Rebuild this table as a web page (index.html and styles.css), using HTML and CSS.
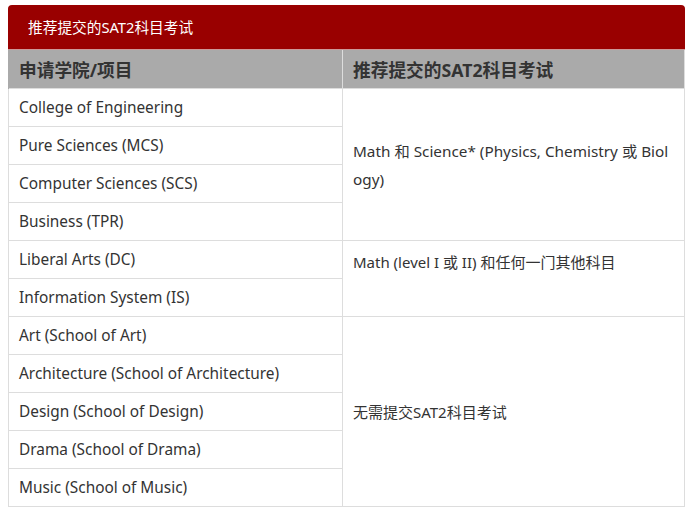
FILE: index.html
```html
<!DOCTYPE html>
<html lang="zh-CN">
<head>
<meta charset="utf-8">
<title>推荐提交的SAT2科目考试</title>
<link rel="stylesheet" href="styles.css">
</head>
<body>
<div class="wrap">
  <div class="title">推荐提交的SAT2科目考试</div>
  <table class="sat">
    <thead>
      <tr><th class="c1">申请学院/项目</th><th class="c2">推荐提交的SAT2科目考试</th></tr>
    </thead>
    <tbody>
      <tr><td>College of Engineering</td><td class="merged m1" rowspan="4">Math 和 Science* (Physics, Chemistry 或 Biology)</td></tr>
      <tr><td>Pure Sciences (MCS)</td></tr>
      <tr><td>Computer Sciences (SCS)</td></tr>
      <tr><td>Business (TPR)</td></tr>
      <tr><td>Liberal Arts (DC)</td><td class="merged m2" rowspan="2">Math (level I 或 II) 和任何一门其他科目</td></tr>
      <tr><td>Information System (IS)</td></tr>
      <tr><td>Art (School of Art)</td><td class="merged" rowspan="5">无需提交SAT2科目考试</td></tr>
      <tr><td>Architecture (School of Architecture)</td></tr>
      <tr><td>Design (School of Design)</td></tr>
      <tr><td>Drama (School of Drama)</td></tr>
      <tr><td>Music (School of Music)</td></tr>
    </tbody>
  </table>
</div>
</body>
</html>
```
FILE: styles.css
```css
html, body {
  margin: 0;
  padding: 0;
  background: #fff;
}
body {
  font-family: "Noto Sans", "Noto Sans CJK SC", sans-serif;
  color: #333;
}
.wrap {
  padding: 5px 0 0 8px;
  width: 677px;
}
.title {
  height: 44px;
  box-sizing: border-box;
  background: #990000;
  color: #fff;
  border-radius: 4px 4px 0 0;
  font-size: 14.7px;
  line-height: 44px;
  padding-left: 20px;
  box-shadow: 0 1px 0 #c99;
}
.sat {
  width: 677px;
  border-collapse: collapse;
  table-layout: fixed;
  margin-top: 1px;
}
.sat th {
  background: #aaaaaa;
  color: #333;
  font-weight: bold;
  font-size: 17.7px;
  text-align: left;
  height: 38px;
  padding: 0 10px;
  border-right: 1px solid #ddd;
  border-left: 1px solid #aaa;
}
.sat th.c1 { width: 313px; }
.sat td {
  border: 1px solid #ddd;
  font-size: 15.4px;
  height: 38px;
  padding: 0 10px;
  box-sizing: border-box;
  line-height: 20px;
}
.sat td.merged {
  font-size: 15px;
  line-height: 28px;
  word-break: break-all;
  vertical-align: middle;
}
.sat td.m1 {
  font-size: 15.3px;
  padding-right: 13px;
}
.sat td.m2 {
  padding-bottom: 34px;
}
```
